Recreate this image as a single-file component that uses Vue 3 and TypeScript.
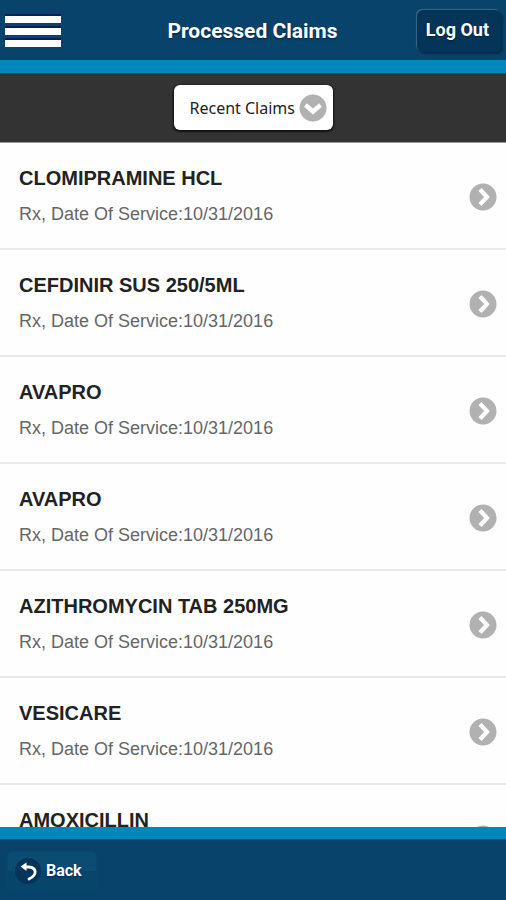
<script setup lang="ts">
import { ref } from 'vue'

interface Claim {
  id: number
  name: string
  type: string
  date: string
}

const filter = ref('recent')

const claims: Claim[] = [
  { id: 1, name: 'CLOMIPRAMINE HCL', type: 'Rx', date: '10/31/2016' },
  { id: 2, name: 'CEFDINIR SUS 250/5ML', type: 'Rx', date: '10/31/2016' },
  { id: 3, name: 'AVAPRO', type: 'Rx', date: '10/31/2016' },
  { id: 4, name: 'AVAPRO', type: 'Rx', date: '10/31/2016' },
  { id: 5, name: 'AZITHROMYCIN TAB 250MG', type: 'Rx', date: '10/31/2016' },
  { id: 6, name: 'VESICARE', type: 'Rx', date: '10/31/2016' },
  { id: 7, name: 'AMOXICILLIN', type: 'Rx', date: '10/31/2016' },
]
</script>

<template>
  <div class="screen">
    <header class="header">
      <button class="menu" type="button" aria-label="Menu">
        <span class="bar"></span>
        <span class="bar"></span>
        <span class="bar"></span>
      </button>
      <h1 class="title">Processed Claims</h1>
      <button class="logout" type="button">Log Out</button>
    </header>

    <div class="filter">
      <div class="picker">
        <select v-model="filter" class="select" aria-label="Claims filter">
          <option value="recent">Recent Claims</option>
        </select>
        <svg class="picker-icon" viewBox="0 0 28 28" aria-hidden="true">
          <circle cx="14" cy="14" r="13.5" fill="#b1b1b1" />
          <path d="M6.5 11 L14 17.5 L21.5 11" fill="none" stroke="#fff" stroke-width="4.4" />
        </svg>
      </div>
    </div>

    <main class="content">
      <ul class="list">
        <li v-for="claim in claims" :key="claim.id" class="item">
          <a class="link" href="#">
            <span class="text">
              <span class="name">{{ claim.name }}</span>
              <span class="detail">{{ claim.type }}, Date Of Service:{{ claim.date }}</span>
            </span>
            <svg class="arrow" viewBox="0 0 28 28" aria-hidden="true">
              <circle cx="14" cy="14" r="13.5" fill="#b1b1b1" />
              <path d="M11 6.5 L18 14 L11 21.5" fill="none" stroke="#fff" stroke-width="4.2" />
            </svg>
          </a>
        </li>
      </ul>
    </main>

    <footer class="footer">
      <button class="back" type="button">
        <svg class="back-icon" viewBox="0 0 26 26" aria-hidden="true">
          <circle cx="13" cy="13" r="13" fill="#053459" />
          <path
            d="M9.5 9 H13.5 C22 9.5 22.5 17 14 21"
            fill="none"
            stroke="#fff"
            stroke-width="2.8"
            stroke-linecap="round"
          />
          <path d="M5.5 8.6 L11.5 4.4 V13 Z" fill="#fff" />
        </svg>
        <span>Back</span>
      </button>
    </footer>
  </div>
</template>

<style>
body {
  margin: 0;
  background: #fff;
}
</style>

<style scoped>
.screen {
  box-sizing: border-box;
  display: flex;
  flex-direction: column;
  height: 100vh;
  font-family: 'Liberation Sans', Arial, sans-serif;
  background: #fefefe;
}

button {
  margin: 0;
  border: 0;
  font-family: Roboto, sans-serif;
  font-weight: 700;
  color: #fff;
  cursor: pointer;
}

.header {
  display: grid;
  grid-template-columns: 1fr auto 1fr;
  align-items: center;
  flex: none;
  box-sizing: border-box;
  height: 73px;
  padding: 2px 5px 0 4px;
  background: #08436b;
  border-bottom: 13px solid #0087bc;
}

.menu {
  display: flex;
  flex-direction: column;
  gap: 5px;
  justify-self: start;
  width: 58px;
  padding: 0 1px;
  background: none;
}

.bar {
  height: 7px;
  background: #fff;
  box-shadow: 0 -2px 0 #02205c;
}

.title {
  margin: 0;
  font-family: Roboto, sans-serif;
  font-size: 21px;
  line-height: 28px;
  font-weight: 700;
  color: #fff;
  text-shadow: 0 1px 2px #021f4c;
}

.logout {
  justify-self: end;
  height: 42px;
  padding: 0 12px 2px 9px;
  font-size: 18px;
  line-height: 24px;
  background: #043558;
  border-radius: 6px;
  box-shadow: -1px -1px 1px #3a6b8c, 2px 2px 2px #032f50;
  text-shadow: 0 1px 2px #021f3c;
}

.filter {
  display: flex;
  justify-content: center;
  align-items: center;
  flex: none;
  box-sizing: border-box;
  height: 70px;
  background: #333;
  border-bottom: 1px solid #999;
}

.picker {
  display: grid;
  align-items: center;
}

.select {
  grid-area: 1 / 1;
  appearance: none;
  box-sizing: border-box;
  width: 159px;
  height: 45px;
  margin: 0;
  padding: 0 38px 0 16px;
  border: 0;
  border-radius: 6px;
  background: #fff;
  box-shadow: 0 1px 2px 1px #111;
  font-family: 'Noto Sans', sans-serif;
  font-size: 16px;
  color: #222;
}

.picker-icon {
  grid-area: 1 / 1;
  justify-self: end;
  width: 28px;
  height: 28px;
  margin-right: 6px;
  pointer-events: none;
}

.content {
  flex: 1;
  min-height: 0;
  overflow: hidden;
}

.list {
  margin: 0;
  padding: 0;
  list-style: none;
}

.item {
  border-bottom: 2px solid #e9e9e9;
}

.link {
  display: flex;
  align-items: center;
  justify-content: space-between;
  padding: 20px 9px 18px 19px;
  color: #222;
  text-decoration: none;
}

.text {
  display: flex;
  flex-direction: column;
  gap: 7px;
  padding-bottom: 2px;
}

.name {
  font-size: 20px;
  line-height: 30px;
  font-weight: 700;
}

.detail {
  font-size: 18px;
  line-height: 28px;
  color: #666;
}

.arrow {
  flex: none;
  width: 28px;
  height: 28px;
}

.footer {
  display: flex;
  align-items: center;
  flex: none;
  box-sizing: border-box;
  height: 73px;
  padding: 2px 8px 0;
  background: #08436b;
  border-top: 12px solid #0087bc;
}

.back {
  display: flex;
  align-items: center;
  gap: 5px;
  height: 38px;
  padding: 0 14px 0 7px;
  font-size: 16px;
  line-height: 24px;
  background: linear-gradient(#0b4c72 50%, #08456b 50%);
  border-radius: 4px;
  box-shadow: 0 0 2px #0c5078;
  text-shadow: 0 1px 2px #02205c;
}

.back-icon {
  width: 26px;
  height: 26px;
}
</style>
